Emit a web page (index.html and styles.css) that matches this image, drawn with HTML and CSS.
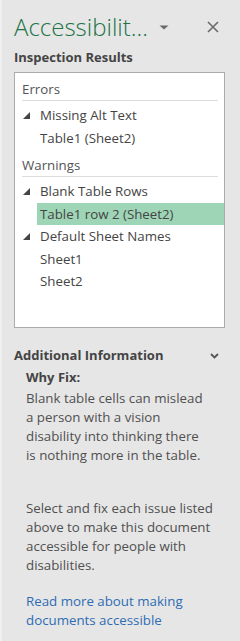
FILE: index.html
```html
<!DOCTYPE html>
<html>
<head>
<meta charset="utf-8">
<link rel="stylesheet" href="styles.css">
</head>
<body>
<div class="pane">
  <header class="pane-header">
    <h1 class="pane-title">Accessibilit...</h1>
    <svg class="title-drop" width="10" height="5" viewBox="0 0 10 5"><path d="M0.5 0.5 H9.5 L5 4.5 Z" fill="#6a6a6a"/></svg>
    <svg class="close" width="12" height="12" viewBox="0 0 12 12"><path d="M1 1 L11 11 M11 1 L1 11" stroke="#6a6a6a" stroke-width="1.6" fill="none"/></svg>
  </header>
  <h2 class="section-title">Inspection Results</h2>
  <div class="results">
    <div class="group">Errors</div>
    <div class="issue"><span class="tri"></span>Missing Alt Text</div>
    <div class="item">Table1 (Sheet2)</div>
    <div class="group later">Warnings</div>
    <div class="issue"><span class="tri"></span>Blank Table Rows</div>
    <div class="item selected">Table1 row 2 (Sheet2)</div>
    <div class="issue"><span class="tri"></span>Default Sheet Names</div>
    <div class="item">Sheet1</div>
    <div class="item">Sheet2</div>
  </div>
  <div class="info-head">
    <h2 class="section-title">Additional Information</h2>
    <svg class="chev" width="9" height="6" viewBox="0 0 9 6"><path d="M1 1 L4.5 4.5 L8 1" stroke="#555" stroke-width="1.8" fill="none"/></svg>
  </div>
  <div class="info">
    <h3 class="why">Why Fix:</h3>
    <p class="para first">Blank table cells can mislead a person with a vision disability into thinking there is nothing more in the table.</p>
    <p class="para second">Select and fix each issue listed above to make this document accessible for people with disabilities.</p>
    <a class="more" href="#">Read more about making documents accessible</a>
  </div>
</div>
</body>
</html>
```
FILE: styles.css
```css
html, body {
  margin: 0;
  padding: 0;
}
body {
  background: #e6e6e6;
  font-family: "Open Sans", "Noto Sans", sans-serif;
  color: #444;
}
.pane {
  width: 240px;
  height: 641px;
  box-sizing: border-box;
  border-left: 2px solid #f0f0f0;
  padding: 0 15px 0 12px;
  overflow: hidden;
}
.pane-header {
  display: flex;
  align-items: center;
  height: 48px;
  padding-top: 5px;
  box-sizing: border-box;
}
.pane-title {
  margin: 0;
  font-size: 24px;
  font-weight: 300;
  color: #217346;
  line-height: 30px;
  white-space: nowrap;
}
.title-drop {
  margin-left: 11px;
  margin-top: 2px;
}
.close {
  margin-left: auto;
  margin-right: 6px;
  margin-top: 1px;
}
.section-title {
  margin: 0;
  font-size: 13px;
  font-weight: 700;
  color: #444;
  line-height: 18px;
}
.results {
  margin-top: 6px;
  background: #fff;
  border: 1px solid #ababab;
  height: 256px;
  box-sizing: border-box;
  padding: 5px 6px 0 7px;
  font-size: 13.3px;
  line-height: 22.5px;
  color: #444;
}
.group {
  border-bottom: 1px solid #dcdcdc;
  line-height: 22px;
  margin-bottom: 3px;
  color: #555;
}
.group.later {
  margin-top: 5px;
}
.issue {
  display: flex;
  align-items: center;
}
.tri {
  width: 0;
  height: 0;
  border-left: 7px solid transparent;
  border-bottom: 7px solid #444;
  margin: 1px 10px 0 1px;
}
.item {
  margin-left: 15px;
  padding-left: 3px;
  margin-right: -6px;
}
.selected {
  background: #9fd5b7;
}
.info-head {
  display: flex;
  align-items: center;
  justify-content: space-between;
  margin-top: 18px;
}
.chev {
  margin-right: 6px;
  margin-top: 1px;
}
.info {
  padding: 0 10px 0 12px;
  font-size: 13.3px;
  line-height: 19px;
}
.why {
  margin: 4px 0 3px;
  font-size: 13px;
  font-weight: 700;
  color: #444;
  line-height: 18px;
}
.para {
  margin: 0;
  color: #505050;
}
.para.first {
  max-width: 184px;
}
.para.second {
  margin-top: 34px;
}
.more {
  display: block;
  margin-top: 17px;
  color: #2e6db4;
  text-decoration: none;
}
```
